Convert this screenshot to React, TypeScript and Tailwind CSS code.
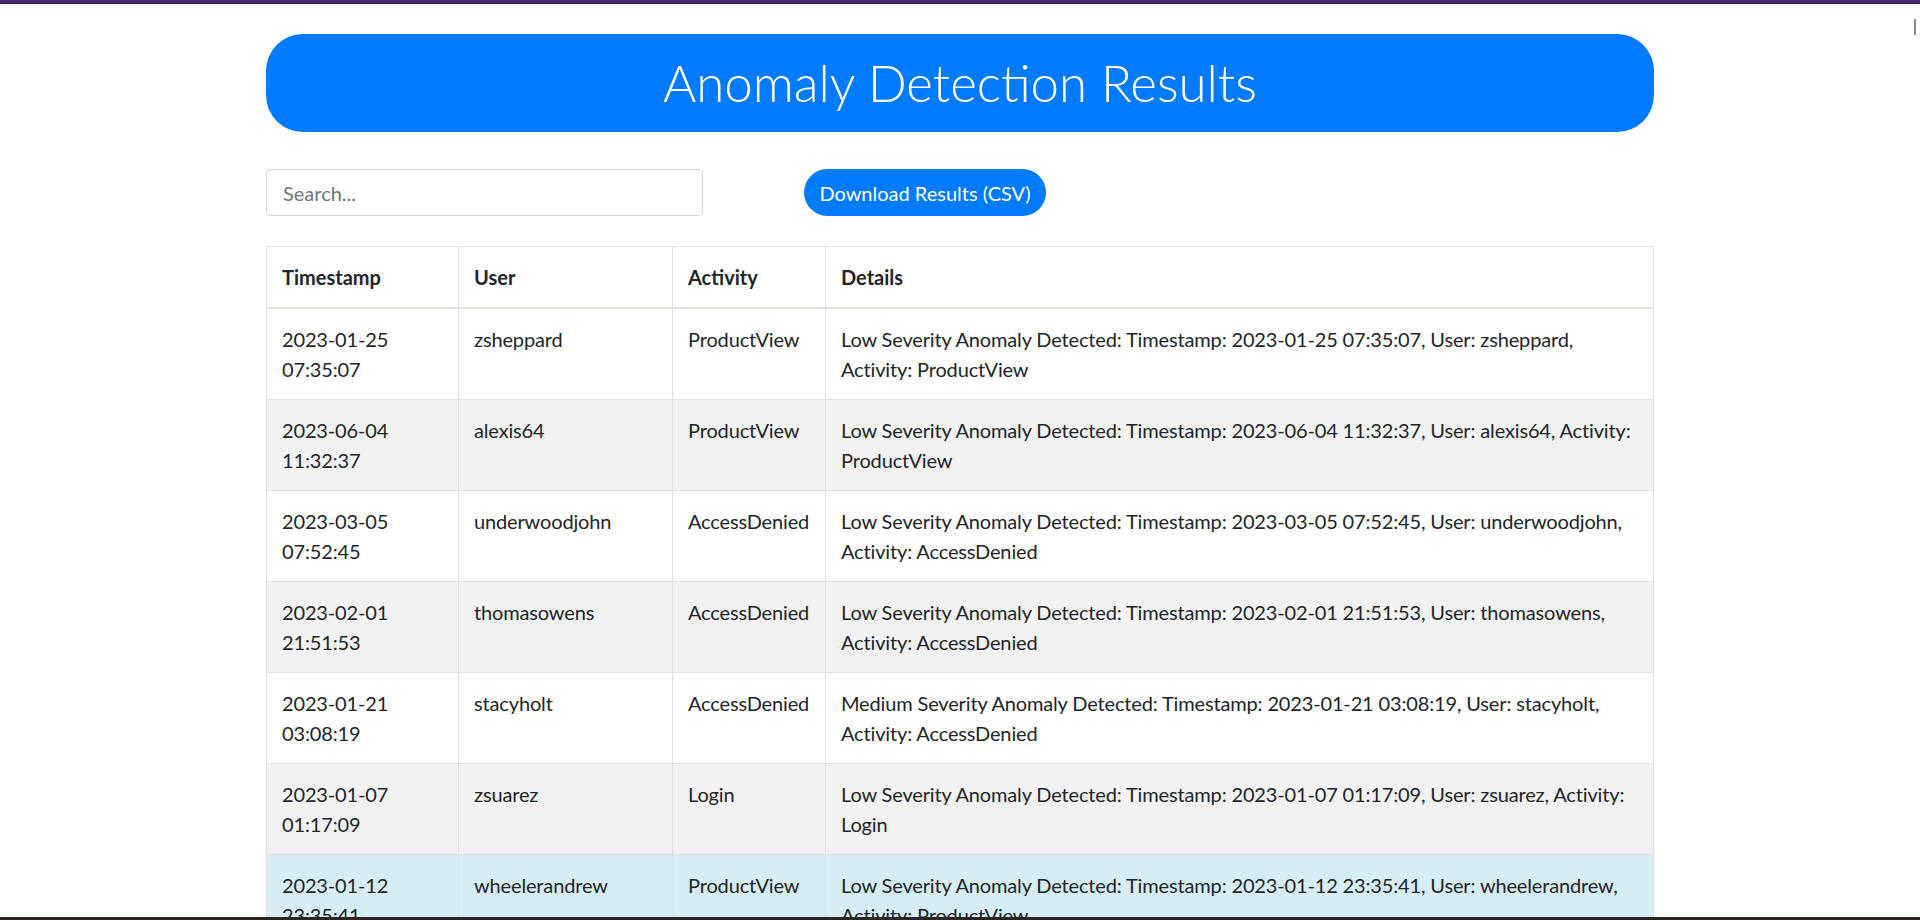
import React from 'react'

interface Anomaly {
  date: string
  time: string
  user: string
  activity: string
  line1: string
  line2: string
  tone: 'white' | 'gray' | 'info'
}

const rows: Anomaly[] = [
  {
    date: '2023-01-25',
    time: '07:35:07',
    user: 'zsheppard',
    activity: 'ProductView',
    line1: 'Low Severity Anomaly Detected: Timestamp: 2023-01-25 07:35:07, User: zsheppard,',
    line2: 'Activity: ProductView',
    tone: 'white',
  },
  {
    date: '2023-06-04',
    time: '11:32:37',
    user: 'alexis64',
    activity: 'ProductView',
    line1: 'Low Severity Anomaly Detected: Timestamp: 2023-06-04 11:32:37, User: alexis64, Activity:',
    line2: 'ProductView',
    tone: 'gray',
  },
  {
    date: '2023-03-05',
    time: '07:52:45',
    user: 'underwoodjohn',
    activity: 'AccessDenied',
    line1: 'Low Severity Anomaly Detected: Timestamp: 2023-03-05 07:52:45, User: underwoodjohn,',
    line2: 'Activity: AccessDenied',
    tone: 'white',
  },
  {
    date: '2023-02-01',
    time: '21:51:53',
    user: 'thomasowens',
    activity: 'AccessDenied',
    line1: 'Low Severity Anomaly Detected: Timestamp: 2023-02-01 21:51:53, User: thomasowens,',
    line2: 'Activity: AccessDenied',
    tone: 'gray',
  },
  {
    date: '2023-01-21',
    time: '03:08:19',
    user: 'stacyholt',
    activity: 'AccessDenied',
    line1: 'Medium Severity Anomaly Detected: Timestamp: 2023-01-21 03:08:19, User: stacyholt,',
    line2: 'Activity: AccessDenied',
    tone: 'white',
  },
  {
    date: '2023-01-07',
    time: '01:17:09',
    user: 'zsuarez',
    activity: 'Login',
    line1: 'Low Severity Anomaly Detected: Timestamp: 2023-01-07 01:17:09, User: zsuarez, Activity:',
    line2: 'Login',
    tone: 'gray',
  },
  {
    date: '2023-01-12',
    time: '23:35:41',
    user: 'wheelerandrew',
    activity: 'ProductView',
    line1: 'Low Severity Anomaly Detected: Timestamp: 2023-01-12 23:35:41, User: wheelerandrew,',
    line2: 'Activity: ProductView',
    tone: 'info',
  },
]

const toneClass = {
  white: 'bg-white',
  gray: 'bg-[#f2f2f2]',
  info: 'bg-[#d7edf6]',
}

export default function App() {
  return (
    <div className="relative h-[920px] w-full overflow-hidden bg-white text-[#212529] font-['Lato','Liberation_Sans',sans-serif]">
      {/* window frame line */}
      <div className="h-[4px] border-b border-[#2b1a47] bg-[#472a73]" />

      <div className="mx-auto w-[1388px]">
        <div className="mt-[30px] flex h-[98px] items-center justify-center rounded-[37px] bg-[#007bff]">
          <h1 className="text-[51px] font-light leading-[60px] text-white">Anomaly Detection Results</h1>
        </div>

        <div className="mt-[37px] flex items-center">
          <input
            type="text"
            placeholder="Search..."
            className="h-[47px] w-[437px] rounded-[5px] border border-[#ced4da] px-[16px] text-[20px] placeholder:text-[#6c757d] focus:outline-none"
          />
          <button className="ml-[101px] h-[47px] w-[242px] rounded-full bg-[#007bff] text-[20px] text-white">
            Download Results (CSV)
          </button>
        </div>

        <table className="mt-[30px] w-full table-fixed border-collapse border border-[#dee2e6] text-[20px] leading-[30px]">
          <colgroup>
            <col className="w-[192px]" />
            <col className="w-[214px]" />
            <col className="w-[153px]" />
            <col />
          </colgroup>
          <thead>
            <tr>
              <th className="border border-b-2 border-[#dee2e6] p-[15px] text-left font-bold">Timestamp</th>
              <th className="border border-b-2 border-[#dee2e6] p-[15px] text-left font-bold">User</th>
              <th className="border border-b-2 border-[#dee2e6] p-[15px] text-left font-bold">Activity</th>
              <th className="border border-b-2 border-[#dee2e6] p-[15px] text-left font-bold">Details</th>
            </tr>
          </thead>
          <tbody className="tracking-[-0.15px]">
            {rows.map((r) => (
              <tr key={r.date + r.user} className={toneClass[r.tone]}>
                <td className="border border-[#dee2e6] p-[15px] align-top">
                  {r.date}
                  <br />
                  {r.time}
                </td>
                <td className="border border-[#dee2e6] p-[15px] align-top">{r.user}</td>
                <td className="border border-[#dee2e6] p-[15px] align-top">{r.activity}</td>
                <td className="whitespace-nowrap border border-[#dee2e6] p-[15px] align-top">
                  {r.line1}
                  <br />
                  {r.line2}
                </td>
              </tr>
            ))}
          </tbody>
        </table>
      </div>

      {/* scrollbar thumb at the right edge */}
      <div className="absolute right-[4px] top-[19px] h-[16px] w-[2px] bg-[#8a8a8a]" />
      {/* taskbar edge */}
      <div className="absolute bottom-0 left-0 h-[3px] w-full bg-[#2a2521]" />
    </div>
  )
}
